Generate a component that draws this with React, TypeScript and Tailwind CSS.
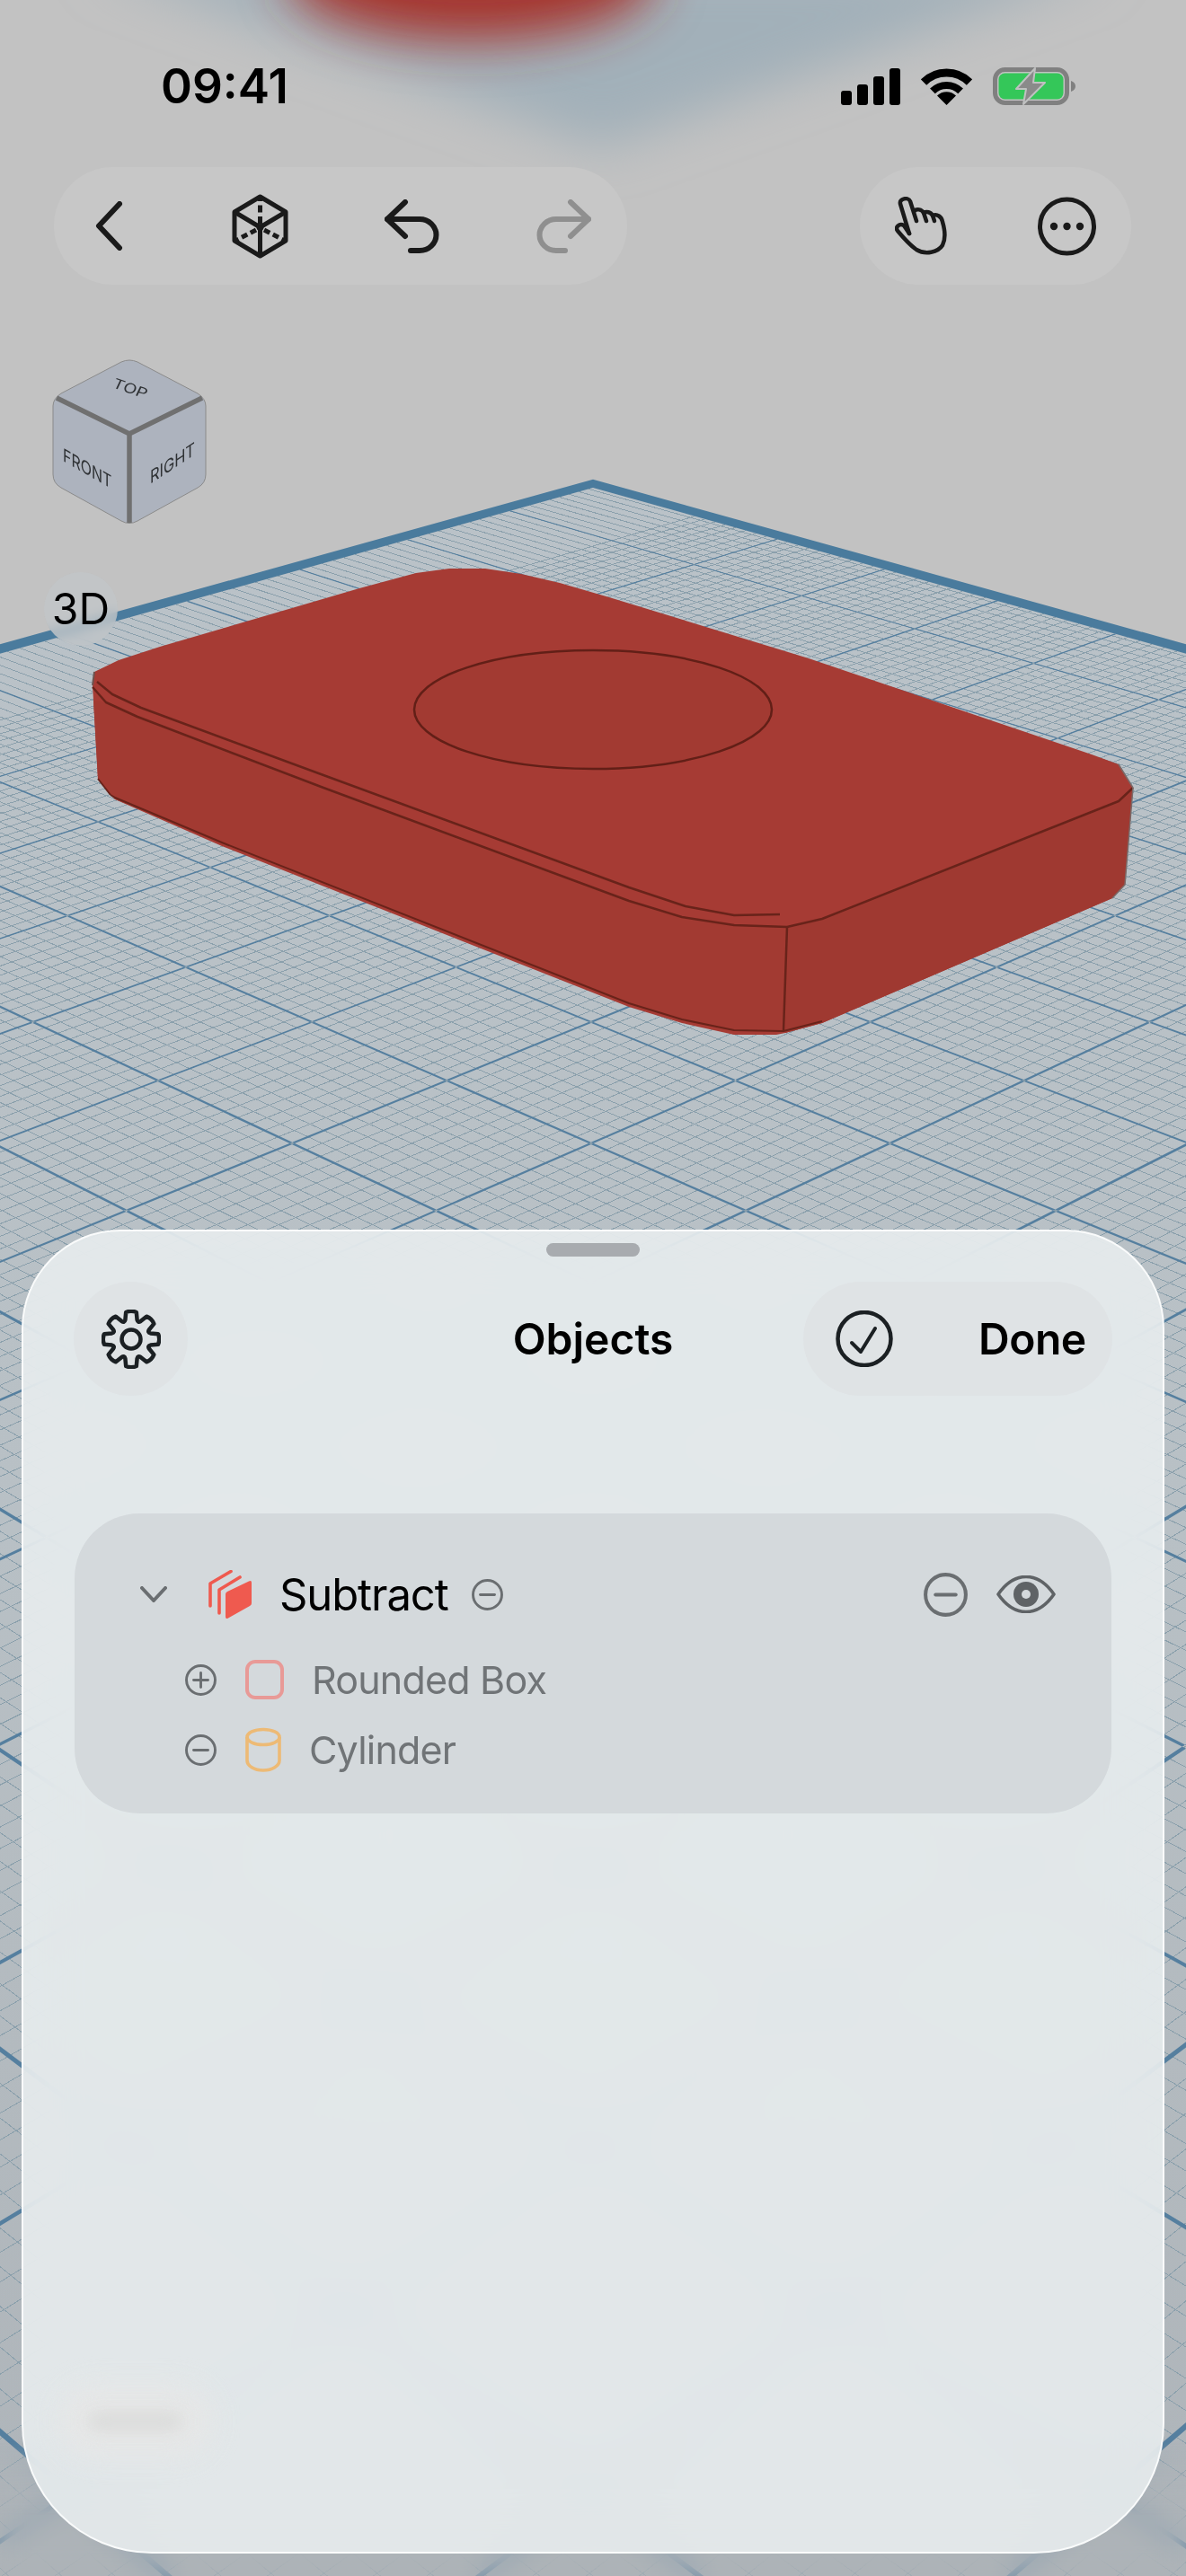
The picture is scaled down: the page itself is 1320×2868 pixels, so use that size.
// perspective floor: apex + two vanishing points, measured off the screenshot
const pt = (u: number, v: number) => {
  const w = 1 - u - v
  return `${((660 - 5379 * u + 4059 * v) / w).toFixed(1)} ${((543 + 778 * u + 778 * v) / w).toFixed(1)}`
}
const STEP = 0.00227
const VMAX = 0.74

function buildGrid() {
  let minor = ''
  let major = ''
  for (let k = -68; k < 260; k++) {
    const a = 0.1554 + k * STEP
    const b = 0.1778 + k * STEP
    if (a >= 0) minor += `M${pt(a, 0)}L${pt(a, VMAX - a)}`
    if (b >= 0) minor += `M${pt(0, b)}L${pt(VMAX - b, b)}`
    if (k % 10 === 0) {
      const d = 0.00019
      if (a >= 0) major += `M${pt(a - d, 0)}L${pt(a + d, 0)}L${pt(a + d, VMAX - a)}L${pt(a - d, VMAX - a)}Z`
      if (b >= 0) major += `M${pt(0, b - d)}L${pt(0, b + d)}L${pt(VMAX - b, b + d)}L${pt(VMAX - b, b - d)}Z`
    }
  }
  return { minor, major }
}
const grid = buildGrid()
const floorPoly = `M${pt(0, 0)}L${pt(0.72, 0)}L${pt(0.36, 0.36)}L${pt(0, 0.72)}Z`
const EDGE = `M${pt(-0.0035, -0.0035)}L${pt(0.72, -0.0035)}L${pt(0.72, 0)}L${pt(0, 0)}L${pt(0, 0.72)}L${pt(-0.0035, 0.72)}Z`

function Scene() {
  return (
    <svg className="absolute inset-0" width={1320} height={2868} viewBox="0 0 1320 2868">
      <defs>
        <filter id="soft" x="-200" y="-300" width="1800" height="800" filterUnits="userSpaceOnUse">
          <feGaussianBlur stdDeviation="27" />
        </filter>
        <linearGradient id="floorFill" x1="0" y1="543" x2="0" y2="2868" gradientUnits="userSpaceOnUse">
          <stop offset="0" stopColor="#bac2c8" />
          <stop offset="0.5" stopColor="#b8c0c5" />
          <stop offset="1" stopColor="#aeb4b9" />
        </linearGradient>
      </defs>
      <rect width="1320" height="2868" fill="#c2c2c2" />
      {/* blurred reflection behind the status bar */}
      <path d="M100 -40L670 165L1240 -40Z" fill="#a2b0b9" filter="url(#soft)" />
      <ellipse cx="525" cy="-30" rx="205" ry="75" fill="#a5352e" filter="url(#soft)" />

      <path d={floorPoly} fill="url(#floorFill)" />
      <path d={grid.minor} stroke="#8ba0ac" strokeWidth="1" fill="none" shapeRendering="crispEdges" />
      <path d={grid.major} fill="#557f9f" />
      <path d={EDGE} fill="#4a7b9d" />

      {/* model silhouette */}
      <path
        d="M105 748L132 735L178 720L400 655L463 638L500 633L540 633L580 639L623 649L678 665L900 733L1215 840L1245 851L1261 877L1252 985L1238 1000L915 1139L874 1150L864 1152L817 1152L759 1139L700 1121L247 942L128 890L123 885L109 867L104 780L103 763Z"
        fill="#a63b34"
      />
      <path d="M876 1032L915 1023L1245 892L1261 877L1252 985L1238 1000L915 1139L874 1150Z" fill="#9f3931" />
      <path d="M104 780L118 782L153 798L360 877L700 1003L759 1021L817 1030L876 1032L872 1148L817 1147L759 1135L700 1117L247 938L128 888L109 867Z" fill="#a23a32" />
      <ellipse cx="660" cy="790" rx="199" ry="66" fill="#a23a32" stroke="#621f17" strokeWidth="2.5" />
      <g fill="none" stroke="#68231a" strokeWidth="2.5" strokeLinejoin="round">
        <path d="M108 759L125 773L157 788L360 863L700 988L763 1009L817 1019L868 1018" />
        <path d="M103 765L118 782L153 798L360 877L700 1003L759 1021L817 1030L876 1032L915 1023L1245 892L1261 877" />
        <path d="M876 1032L872 1148" />
        <path d="M123 885L128 888L247 938L700 1117L759 1135L817 1147L872 1148L915 1137" strokeWidth="2" />
        <path d="M109 867L123 885" strokeWidth="2" />
      </g>
      <path d="M105 748L103 763" stroke="#6d5450" strokeWidth="2" />
      <path d="M1245 851L1261 877L1252 985L1238 1000" fill="none" stroke="#7b6a68" strokeWidth="1.5" />
    </svg>
  )
}

function Signal() {
  return (
    <svg width={66} height={41} viewBox="0 0 66 41" fill="#000">
      <rect x="0" y="25" width="12" height="16" rx="3" />
      <rect x="18" y="18" width="12" height="23" rx="3" />
      <rect x="36" y="9" width="12" height="32" rx="3" />
      <rect x="54" y="0" width="12" height="41" rx="3" />
    </svg>
  )
}

function Wifi() {
  return (
    <svg width={57} height={42} viewBox="0 0 57 42">
      <path d="M3 16.5A36 36 0 0 1 54 16.5" fill="none" stroke="#000" strokeWidth="9" />
      <path d="M12.9 26.4A22 22 0 0 1 44.1 26.4" fill="none" stroke="#000" strokeWidth="8" />
      <path d="M28.5 42L18 31.5A15 15 0 0 1 39 31.5Z" fill="#000" />
    </svg>
  )
}

function Battery() {
  return (
    <svg width={92} height={42} viewBox="0 0 92 42">
      <rect x="2.5" y="2.5" width="80" height="37" rx="11" fill="none" stroke="#808080" strokeWidth="5" />
      <rect x="6.5" y="6.5" width="72" height="29" rx="7" fill="#34c759" />
      <path d="M87 15C90 16 92 18 92 21C92 24 90 26 87 27Z" fill="#808080" />
      <path d="M47 1L26 24H37L34 41L58 17H45Z" fill="#8a8a8a" stroke="#c0c1c1" strokeWidth="2" strokeLinejoin="round" />
    </svg>
  )
}

function Back() {
  return (
    <svg width={31} height={55} viewBox="0 0 31 55" fill="none" stroke="#1a1a1a" strokeWidth="6" strokeLinecap="round" strokeLinejoin="round">
      <path d="M27 3L4 27.5L27 52" />
    </svg>
  )
}

function CubeIcon() {
  return (
    <svg width={63} height={72} viewBox="0 0 63 72" fill="none" stroke="#1a1a1a" strokeWidth="5" strokeLinejoin="round">
      <path d="M31.5 3L60 20V52L31.5 69L3 52V20Z" />
      <path d="M3 20L31.5 37L60 20M31.5 37V69" />
      <path d="M31.5 33V5" strokeDasharray="8 4.5" />
      <path d="M27 40L4 52M36 40L59 52" strokeDasharray="7 4" />
      <circle cx="31.5" cy="37" r="4" fill="#1a1a1a" stroke="none" />
    </svg>
  )
}

function UndoIcon({ color, flip }: { color: string; flip?: boolean }) {
  return (
    <svg width={61} height={60} viewBox="0 0 61 60" fill="none" stroke={color} strokeWidth="6" strokeLinecap="round" strokeLinejoin="round" className={flip ? '-scale-x-100' : ''}>
      <path d="M23 3L3 22L23 41" />
      <path d="M3 22H39A18.5 17.5 0 0 1 39 57H29" />
    </svg>
  )
}

function Hand() {
  return (
    <svg width={58} height={65} viewBox="0 0 58 65" fill="none" stroke="#1a1a1a" strokeWidth="4.5" strokeLinecap="round" strokeLinejoin="round">
      <path d="M16 41L6 8C4.5 2 15 0 17 5L24 27" />
      <path d="M21.5 16C24 13 30 14 32 18L35 27" />
      <path d="M32 18C35 16 40 17 42 21L44 27" />
      <path d="M42 21C47 19 52 22 53 28C56 38 57 46 53 54C48 62 34 65 24 59C17 54 8 44 3 38C0 34 5 29 10 32L16 41" />
    </svg>
  )
}

function MoreIcon() {
  return (
    <svg width={65} height={66} viewBox="0 0 65 66">
      <circle cx="32.5" cy="33" r="30" fill="none" stroke="#1a1a1a" strokeWidth="5" />
      <circle cx="18" cy="33" r="4.2" fill="#1a1a1a" />
      <circle cx="32.5" cy="33" r="4.2" fill="#1a1a1a" />
      <circle cx="47" cy="33" r="4.2" fill="#1a1a1a" />
    </svg>
  )
}

function NavCube() {
  return (
    <svg width={172} height={187} viewBox="58 398 172 187">
      <path
        d="M135 403Q144 399 153 403L220 438Q229 444 229 452L229 528Q229 538 220 543L153 580Q144 585 135 580L68 543Q59 538 59 528L59 452Q59 444 68 438Z"
        fill="#adb3be"
        stroke="#8a8a8a"
        strokeWidth="1"
      />
      <path d="M63 443L144 483L225 443M144 483V582" fill="none" stroke="#707070" strokeWidth="5.5" />
      <g fill="#2e3134" fontFamily="Inter, sans-serif">
        <text fontSize="21" transform="matrix(0.88 0.3 -0.32 0.68 124 431)">TOP</text>
        <text fontSize="20" transform="matrix(0.8 0.46 0 1 70 513)">FRONT</text>
        <text fontSize="20" transform="matrix(0.82 -0.54 0 1 167 539)">RIGHT</text>
      </g>
    </svg>
  )
}

const gearPath = (() => {
  const c = 33
  const pts: string[] = []
  for (let i = 0; i < 8; i++) {
    const t = (i * Math.PI) / 4 - Math.PI / 2
    const p = (r: number, a: number) => `${(c + r * Math.cos(t + a)).toFixed(1)} ${(c + r * Math.sin(t + a)).toFixed(1)}`
    pts.push(`${i === 0 ? 'M' : 'Q' + p(19.5, -Math.PI / 8) + ' '}${p(22.5, -0.3)}L${p(30.5, -0.19)}Q${p(32.5, 0)} ${p(30.5, 0.19)}L${p(22.5, 0.3)}`)
  }
  return pts.join('') + `Q${(c + 19.5 * Math.cos(-Math.PI / 2 - Math.PI / 8)).toFixed(1)} ${(c + 19.5 * Math.sin(-Math.PI / 2 - Math.PI / 8)).toFixed(1)} ${(c + 22.5 * Math.cos(-Math.PI / 2 - 0.3)).toFixed(1)} ${(c + 22.5 * Math.sin(-Math.PI / 2 - 0.3)).toFixed(1)}Z`
})()

function Gear() {
  return (
    <svg width={66} height={66} viewBox="0 0 66 66" fill="none" stroke="#1b2023" strokeWidth="4.5" strokeLinejoin="round">
      <path d={gearPath} />
      <circle cx="33" cy="33" r="10.5" />
    </svg>
  )
}

function CheckCircle() {
  return (
    <svg width={64} height={63} viewBox="0 0 64 63" fill="none" stroke="#1b2023">
      <circle cx="32" cy="31.5" r="29.5" strokeWidth="4.5" />
      <path d="M18 36L28 46L44 20" strokeWidth="4" strokeLinecap="round" strokeLinejoin="round" />
    </svg>
  )
}

function RoundSign({ size, plus }: { size: number; plus?: boolean }) {
  return (
    <svg width={size} height={size} viewBox="0 0 35 35" fill="none" stroke="#6a6e71" strokeWidth="2.9" strokeLinecap="round" className="shrink-0">
      <circle cx="17.5" cy="17.5" r="16" />
      <path d="M9.5 17.5H25.5" />
      {plus && <path d="M17.5 9.5V25.5" />}
    </svg>
  )
}

function SubtractIcon() {
  return (
    <svg width={48} height={54} viewBox="0 0 48 54" className="shrink-0">
      <path d="M2 40V15L25 1.5M12 48V22L35 8" fill="none" stroke="#ef5a4f" strokeWidth="3.6" strokeLinecap="round" strokeLinejoin="round" />
      <path d="M19 27Q19 25 21 24L45 12.5Q48 11 48 14V37Q48 39 46 40L22 53.5Q19 55 19 52Z" fill="#ef5a4f" />
    </svg>
  )
}

function Eye() {
  return (
    <svg width={66} height={42} viewBox="0 0 66 42">
      <path d="M2 21C20 -5 46 -5 64 21C46 47 20 47 2 21Z" fill="none" stroke="#5f6366" strokeWidth="3.6" strokeLinejoin="round" />
      <circle cx="33" cy="21" r="14" fill="#5f6366" />
      <circle cx="33" cy="21" r="5" fill="#d4d9dc" />
    </svg>
  )
}

function Cylinder() {
  return (
    <svg width={40} height={50} viewBox="0 0 40 50" fill="none" stroke="#edba75" strokeWidth="3.6" className="shrink-0">
      <ellipse cx="20" cy="11" rx="18" ry="8.5" />
      <path d="M2 11V37C2 43 10 48 20 48C30 48 38 43 38 37V11" />
    </svg>
  )
}

export default function App() {
  return (
    <div className="relative w-[1320px] h-[2868px] overflow-hidden bg-[#c2c2c2] font-['Inter',sans-serif]">
      <Scene />

      {/* blur that rises from the bottom edge */}
      <div className="absolute bottom-0 left-0 w-full h-[150px] bg-[#aeb3b7]/30 backdrop-blur-[14px] [mask-image:linear-gradient(to_top,black_45%,transparent)]" />

      <div className="relative flex flex-col">
        {/* status bar */}
        <div className="flex justify-between items-center pl-[179px] pr-[123px] pt-[75px] h-[117px]">
          <span className="text-[53px] leading-none font-semibold text-black">09:41</span>
          <div className="flex items-center gap-[23px]">
            <Signal />
            <Wifi />
            <Battery />
          </div>
        </div>

        {/* toolbar */}
        <div className="flex justify-between pl-[60px] pr-[61px] mt-[69px]">
          <div className="flex items-center w-[638px] h-[131px] rounded-[66px] bg-[#c7c7c7] pl-[46px]">
            <Back />
            <div className="ml-[121px]"><CubeIcon /></div>
            <div className="ml-[107px]"><UndoIcon color="#1a1a1a" /></div>
            <div className="ml-[108px]"><UndoIcon color="#8f8f8f" flip /></div>
          </div>
          <div className="flex items-center w-[302px] h-[131px] rounded-[66px] bg-[#c7c7c7] pl-[39px] gap-[101px]">
            <Hand />
            <MoreIcon />
          </div>
        </div>

        <div className="ml-[58px] mt-[81px]">
          <NavCube />
        </div>

        <div className="ml-[49px] mt-[52px] w-[82px] h-[82px] rounded-full bg-[#c2c6c8]/75 backdrop-blur-[6px] flex items-center justify-center">
          <span className="text-[48px] leading-none text-black">3D</span>
        </div>

        {/* objects sheet */}
        <div className="relative ml-[24px] mt-[650px] w-[1272px] h-[1474px] rounded-t-[110px] rounded-b-[145px] border-2 border-white/80 bg-[#ebf0f1]/85 backdrop-blur-[30px] overflow-hidden">
          <div className="absolute left-[40px] bottom-[105px] w-[170px] h-[80px] rounded-full bg-[#e6e7e7] blur-[14px]" />
          <div className="absolute left-[72px] bottom-[135px] w-[105px] h-[20px] rounded-full bg-[#dadbda] blur-[9px]" />

          <div className="relative flex flex-col">
            <div className="mx-auto mt-[13px] w-[104px] h-[15px] rounded-full bg-[#a8abaf]" />

            <div className="grid grid-cols-[1fr_auto_1fr] items-center mt-[28px] px-[56px]">
              <div className="flex items-center justify-center w-[127px] h-[127px] rounded-full bg-[#dfe3e5]">
                <Gear />
              </div>
              <span className="text-[48px] leading-none font-semibold text-black">Objects</span>
              <div className="justify-self-end flex items-center w-[344px] h-[127px] rounded-[64px] bg-[#dfe3e5] pl-[36px]">
                <CheckCircle />
                <span className="ml-[95px] text-[48px] leading-none font-semibold text-black tracking-[-0.5px]">Done</span>
              </div>
            </div>

            <div className="mt-[131px] mx-[57px] h-[334px] rounded-[72px] bg-[#d4d9dc] pt-[65px] pl-[73px] pr-[62px]">
              <div className="flex items-center h-[50px]">
                <svg width={30} height={18} viewBox="0 0 30 18" fill="none" stroke="#6a6e71" strokeWidth="4" strokeLinecap="round" strokeLinejoin="round" className="shrink-0">
                  <path d="M2 2L15 16L28 2" />
                </svg>
                <div className="ml-[46px]"><SubtractIcon /></div>
                <span className="ml-[31px] text-[49px] leading-none text-black tracking-[-1.1px]">Subtract</span>
                <div className="ml-[26px]"><RoundSign size={35} /></div>
                <div className="ml-auto"><RoundSign size={49} /></div>
                <div className="ml-[32px]"><Eye /></div>
              </div>

              <div className="flex items-center h-[44px] mt-[48px] pl-[50px]">
                <RoundSign size={35} plus />
                <div className="ml-[32px] w-[43px] h-[44px] rounded-[11px] border-[4px] border-[#e89a97] shrink-0" />
                <span className="ml-[31px] text-[43px] leading-none text-[#707477] tracking-[-0.8px]">Rounded Box</span>
              </div>

              <div className="flex items-center h-[50px] mt-[31px] pl-[50px]">
                <RoundSign size={35} />
                <div className="ml-[32px]"><Cylinder /></div>
                <span className="ml-[31px] text-[43px] leading-none text-[#707477] tracking-[-0.8px]">Cylinder</span>
              </div>
            </div>
          </div>
        </div>
      </div>
    </div>
  )
}
